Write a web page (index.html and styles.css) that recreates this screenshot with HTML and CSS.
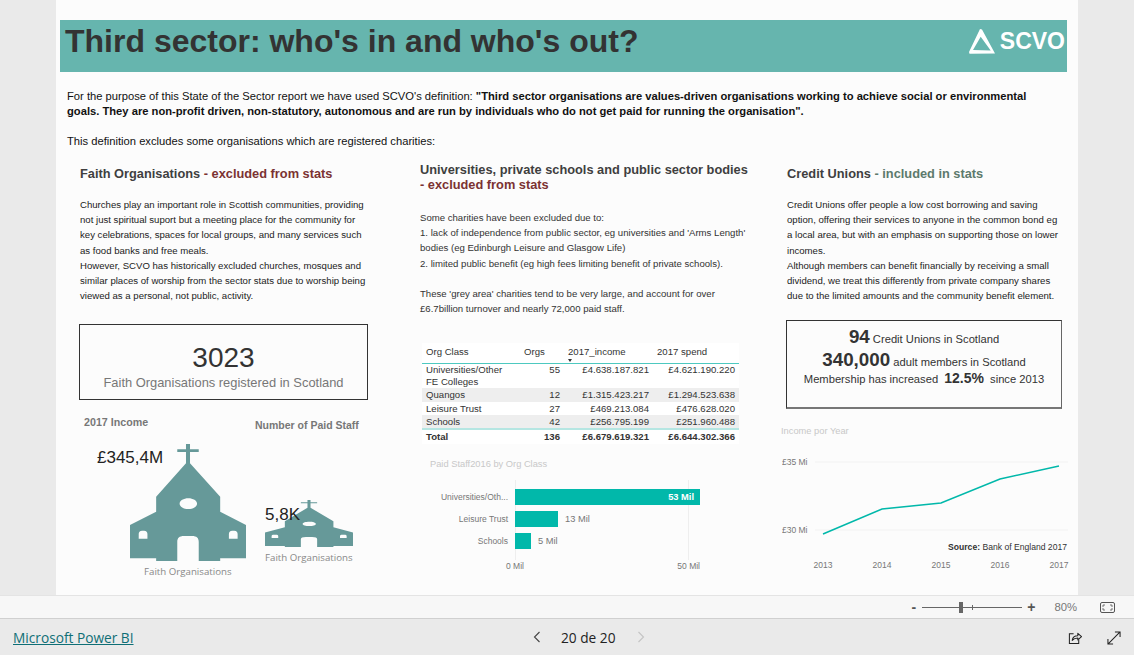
FILE: index.html
```html
<!DOCTYPE html>
<html lang="en">
  <head>
    <meta charset="UTF-8" />
    <meta name="viewport" content="width=device-width, initial-scale=1.0" />
    <title>Third sector: who's in and who's out?</title>
    <link rel="stylesheet" href="styles.css">
  </head>
  <body>
    <svg class="defs" width="0" height="0">
      <symbol id="church" viewBox="211 132 346 351" preserveAspectRatio="none">
        <path fill-rule="evenodd" d="M378 132h12v16h26v8h-26v34l90 100v45l77 40v100h-77v8H289v-8h-78V375l78-40v-45l89-100v-34h-26v-8h26zM385 295c-14 0-26 7-26 16s12 16 26 16 26-7 26-16-12-16-26-16zM372 408c-14 0-20 6-20 18v57h64v-57c0-12-6-18-20-18zM247 392c-7 0-10 4-10 10v14h26v-14c0-6-3-10-10-10zM516 392c-7 0-10 4-10 10v14h26v-14c0-6-3-10-10-10z" />
      </symbol>
    </svg>

    <main class="canvas">
      <header class="banner">
        <h1>Third sector: who's in and who's out?</h1>
        <div class="logo">
          <svg width="27" height="25" viewBox="0 0 27 25">
            <path fill="#fff" fill-rule="evenodd" d="M11 0 13 .5 26 24.500 .5 24.800 0 23zM11.700 7.700 4 21 21.700 21.500z" />
          </svg>
          <span>SCVO</span>
        </div>
      </header>

      <section class="intro">
        <p>For the purpose of this State of the Sector report we have used SCVO's definition: <b>"Third sector organisations are values-driven organisations working to achieve social or environmental<br>goals. They are non-profit driven, non-statutory, autonomous and are run by individuals who do not get paid for running the organisation".</b></p>
        <p class="intro-last">This definition excludes some organisations which are registered charities:</p>
      </section>

      <div class="columns">
        <section class="col col-faith">
          <h2>Faith Organisations <span class="out">- excluded from stats</span></h2>
          <p class="copy">Churches play an important role in Scottish communities, providing<br>not just spiritual suport but a meeting place for the community for<br>key celebrations, spaces for local groups, and many services such<br>as food banks and free meals.<br>However, SCVO has historically excluded churches, mosques and<br>similar places of worship from the sector stats due to worship being<br>viewed as a personal, not public, activity.</p>
          <div class="card-faith">
            <div class="card-num">3023</div>
            <div class="card-label">Faith Organisations registered in Scotland</div>
          </div>
          <div class="pictos">
            <div class="picto picto-income">
              <h3>2017 Income</h3>
              <div class="picto-value">£345,4M</div>
              <svg class="church-big"><use href="#church" /></svg>
              <div class="picto-label">Faith Organisations</div>
            </div>
            <div class="picto picto-staff">
              <h3>Number of Paid Staff</h3>
              <div class="picto-value">5,8K</div>
              <svg class="church-small"><use href="#church" /></svg>
              <div class="picto-label">Faith Organisations</div>
            </div>
          </div>
        </section>

        <section class="col col-uni">
          <h2>Universities, private schools and public sector bodies<br><span class="out">- excluded from stats</span></h2>
          <p class="copy">Some charities have been excluded due to:<br>1. lack of independence from public sector, eg universities and 'Arms Length'<br>bodies (eg Edinburgh Leisure and Glasgow Life)<br>2. limited public benefit (eg high fees limiting benefit of private schools).<br><br>These 'grey area' charities tend to be very large, and account for over<br>£6.7billion turnover and nearly 72,000 paid staff.</p>
          <table class="orgs">
            <thead>
              <tr><th class="c-name">Org Class</th><th class="c-orgs">Orgs</th><th class="c-inc">2017_income<i class="sort"></i></th><th class="c-spend">2017 spend</th></tr>
            </thead>
            <tbody>
              <tr><td>Universities/Other<br>FE Colleges</td><td class="num">55</td><td class="num">£4.638.187.821</td><td class="num">£4.621.190.220</td></tr>
              <tr class="alt"><td>Quangos</td><td class="num">12</td><td class="num">£1.315.423.217</td><td class="num">£1.294.523.638</td></tr>
              <tr><td>Leisure Trust</td><td class="num">27</td><td class="num">£469.213.084</td><td class="num">£476.628.020</td></tr>
              <tr class="alt"><td>Schools</td><td class="num">42</td><td class="num">£256.795.199</td><td class="num">£251.960.488</td></tr>
            </tbody>
            <tfoot>
              <tr><td>Total</td><td class="num">136</td><td class="num">£6.679.619.321</td><td class="num">£6.644.302.366</td></tr>
            </tfoot>
          </table>
          <div class="bars">
            <h4>Paid Staff2016 by Org Class</h4>
            <div class="bar-plot">
              <div class="bar-row"><span class="bar-name">Universities/Oth...</span><div class="bar" style="width: 185px"><em>53 Mil</em></div></div>
              <div class="bar-row"><span class="bar-name">Leisure Trust</span><div class="bar" style="width: 43px"></div><span class="bar-val">13 Mil</span></div>
              <div class="bar-row"><span class="bar-name">Schools</span><div class="bar" style="width: 16px"></div><span class="bar-val">5 Mil</span></div>
            </div>
            <div class="bar-axis"><span>0 Mil</span><span>50 Mil</span></div>
          </div>
        </section>

        <section class="col col-credit">
          <h2>Credit Unions <span class="in">- included in stats</span></h2>
          <p class="copy">Credit Unions offer people a low cost borrowing and saving<br>option, offering their services to anyone in the common bond eg<br>a local area, but with an emphasis on supporting those on lower<br>incomes.<br>Although members can benefit financially by receiving a small<br>dividend, we treat this differently from private company shares<br>due to the limited amounts and the community benefit element.</p>
          <div class="card-credit">
            <p class="first"><b class="big">94</b> Credit Unions in Scotland</p>
            <p class="second"><b class="big">340,000</b> adult members in Scotland</p>
            <p class="third">Membership has increased <b>12.5%</b> since 2013</p>
          </div>
          <div class="line-chart">
            <h4>Income por Year</h4>
            <svg class="line-svg" width="291" height="145" viewBox="0 0 291 145">
              <g class="grid">
                <line x1="33" y1="19" x2="286" y2="19" />
                <line x1="33" y1="87" x2="286" y2="87" />
              </g>
              <polyline class="trend" points="41,91 100,66 159,60 218,36 277,23" />
              <text class="tick" x="0" y="22">£35 Mi</text>
              <text class="tick" x="0" y="90">£30 Mi</text>
              <text class="src" x="285" y="107" text-anchor="end"><tspan font-weight="700">Source:</tspan> Bank of England 2017</text>
              <text class="tick" x="41" y="125" text-anchor="middle">2013</text>
              <text class="tick" x="100" y="125" text-anchor="middle">2014</text>
              <text class="tick" x="159" y="125" text-anchor="middle">2015</text>
              <text class="tick" x="218" y="125" text-anchor="middle">2016</text>
              <text class="tick" x="277" y="125" text-anchor="middle">2017</text>
            </svg>
          </div>
        </section>
      </div>
    </main>

    <div class="zoom-bar">
      <span class="zoom-btn">-</span>
      <div class="slider"><i class="thumb"></i><i class="mark"></i></div>
      <span class="zoom-btn">+</span>
      <span class="zoom-pct">80%</span>
      <svg class="fit" width="15" height="11" viewBox="0 0 15 11">
        <rect x="0.5" y="0.5" width="14" height="10" rx="1.5" fill="none" stroke="#555" />
        <path d="M3 5V3h2M10 3h2v2M12 6v2h-2M5 8H3V6" fill="none" stroke="#555" stroke-width="0.8" />
      </svg>
    </div>

    <footer class="footer">
      <a class="brand" href="#">Microsoft Power BI</a>
      <div class="pager">
        <svg width="8" height="12" viewBox="0 0 8 12"><path d="M6.5 1 1.5 6l5 5" fill="none" stroke="#444" stroke-width="1.1" /></svg>
        <span>20 de 20</span>
        <svg width="8" height="12" viewBox="0 0 8 12"><path d="M1.5 1l5 5-5 5" fill="none" stroke="#c4c4c4" stroke-width="1.1" /></svg>
      </div>
      <div class="actions">
        <svg width="14" height="14" viewBox="0 0 15 15">
          <path d="M6 3H1.500v10.500h10V9" fill="none" stroke="#222" stroke-width="1.100" />
          <path d="M4.500 10c.5-3.500 3-5 6-5V2.500L14.500 6l-4 3.500V7.500c-2.500 0-4.500 .8-6 2.500z" fill="none" stroke="#222" stroke-width="1.100" stroke-linejoin="round" />
        </svg>
        <svg width="14" height="14" viewBox="0 0 15 15">
          <path d="M1 14 14 1M8.500 1H14v5.500M1 8.500V14h5.500" fill="none" stroke="#222" stroke-width="1.100" />
        </svg>
      </div>
    </footer>
  </body>
</html>
```

FILE: styles.css
```css
* {
  box-sizing: border-box;
}

html,
body {
  height: 100%;
}

body {
  margin: 0;
  padding: 0;
  display: flex;
  flex-direction: column;
  overflow: hidden;
  font-family: "Liberation Sans", Arial, sans-serif;
  background-color: #eaeaea;
  color: #252423;
}

h1,
h2,
h3,
h4,
p {
  margin: 0;
  font-weight: normal;
}

.defs {
  position: absolute;
}

.canvas {
  width: 1022px;
  height: 595px;
  margin-left: 56px;
  padding: 20px 11px 0 4px;
  background-color: #fcfcfc;
  flex: none;
}

.banner {
  height: 52px;
  padding: 0 2px 10px 5px;
  display: flex;
  justify-content: space-between;
  align-items: center;
  background-color: #66b5ae;
}

.banner h1 {
  font-size: 32px;
  font-weight: 700;
  color: #333333;
}

.logo {
  display: flex;
  align-items: center;
  gap: 4px;
  color: #fff;
  font-size: 23px;
  font-weight: 700;
}

.intro {
  padding: 17px 0 0 7px;
  font-size: 11.2px;
  line-height: 15px;
  color: #111;
}

.intro-last {
  margin-top: 15px;
}

.columns {
  display: grid;
  grid-template-columns: 340px 367px 1fr;
  margin-left: 20px;
  margin-top: 13px;
}

.col h2 {
  font-size: 12.8px;
  font-weight: 700;
  line-height: 15px;
  color: #3f3f3f;
}

.out {
  color: #7b3232;
}

.in {
  color: #5d7a6c;
}

.copy {
  margin-top: 16px;
  font-size: 9.6px;
  line-height: 15.2px;
  color: #222;
}

.col-faith h2,
.col-credit h2 {
  padding-top: 4px;
}

.col-uni .copy {
  margin-top: 18px;
  color: #333;
}

.card-faith {
  width: 289px;
  height: 76px;
  margin-top: 21px;
  margin-left: -1px;
  padding-top: 17px;
  border: 1px solid #333;
  text-align: center;
}

.card-num {
  font-size: 28px;
  line-height: 32px;
  color: #333;
}

.card-label {
  margin-top: 1px;
  font-size: 12.9px;
  line-height: 16px;
  color: #777;
}

.pictos {
  position: relative;
  height: 170px;
  margin-top: 16px;
  margin-left: -1px;
}

.picto {
  position: absolute;
  top: 0;
}

.picto h3 {
  font-size: 10.7px;
  font-weight: 700;
  color: #777;
  white-space: nowrap;
}

.picto-value {
  position: absolute;
  font-size: 17px;
  color: #222;
}

.picto-label {
  position: absolute;
  font-family: "Open Sans", "Noto Sans", sans-serif;
  font-size: 9.7px;
  color: #888;
  white-space: nowrap;
}

.picto-income {
  left: 5px;
}

.picto-income .picto-value {
  left: 13px;
  top: 32px;
}

.church-big {
  position: absolute;
  left: 46px;
  top: 28px;
  width: 116px;
  height: 117px;
  fill: #669999;
}

.picto-income .picto-label {
  left: 60px;
  top: 149px;
}

.picto-staff {
  left: 176px;
  top: 3px;
}

.picto-staff h3 {
  font-size: 10.5px;
}

.picto-staff .picto-value {
  left: 10px;
  top: 86px;
  z-index: 1;
}

.church-small {
  position: absolute;
  left: 10px;
  top: 81px;
  width: 88px;
  height: 47px;
  fill: #669999;
}

.picto-staff .picto-label {
  left: 10px;
  top: 132px;
}

.orgs {
  width: 317px;
  margin-top: 27px;
  margin-left: 2px;
  table-layout: fixed;
  border-collapse: collapse;
  background-color: #fff;
  font-size: 9.6px;
  color: #333;
}

.orgs th {
  padding: 3px 4px 6px;
  height: 20px;
  font-weight: normal;
  text-align: left;
  vertical-align: top;
  position: relative;
  border-bottom: 1px solid #4dc9c0;
}

.c-name {
  width: 98px;
}

.c-orgs {
  width: 44px;
}

.c-inc {
  width: 89px;
}

.sort {
  position: absolute;
  left: 4px;
  bottom: 1px;
  border: 2px solid transparent;
  border-top: 3px solid #333;
  border-bottom: 0;
}

.orgs td {
  padding: 0 4px;
  line-height: 13.3px;
  vertical-align: top;
}

.orgs tbody tr:first-child td {
  line-height: 12px;
}

.orgs .num {
  text-align: right;
}

.orgs .alt td {
  background-color: #eeeeee;
}

.orgs tfoot td {
  font-weight: 700;
  border-top: 2px solid #b5e6e2;
}

.bars {
  margin-top: 15px;
  margin-left: 10px;
  position: relative;
}

.bars h4,
.line-chart h4 {
  font-size: 9.3px;
  color: #c8c8c8;
}

.bar-plot {
  margin-top: 11px;
  margin-left: 85px;
  height: 80px;
  padding-top: 9px;
  display: flex;
  flex-direction: column;
  gap: 6px;
  background:
    linear-gradient(#eee, #eee) 0 0 / 1px 100% no-repeat,
    linear-gradient(#eee, #eee) 173px 0 / 1px 100% no-repeat;
}

.bar-row {
  position: relative;
  height: 16px;
  display: flex;
  align-items: center;
  gap: 7px;
}

.bar-name {
  position: absolute;
  right: 100%;
  margin-right: 7px;
  font-size: 8.5px;
  color: #777;
  white-space: nowrap;
}

.bar {
  height: 16px;
  background-color: #01b8aa;
  display: flex;
  justify-content: flex-end;
  align-items: center;
  padding-right: 6px;
}

.bar em {
  font-style: normal;
  font-weight: 700;
  font-size: 9.3px;
  color: #fff;
}

.bar-val {
  font-size: 9.3px;
  color: #777;
}

.bar-axis {
  margin-left: 76px;
  width: 194px;
  display: flex;
  justify-content: space-between;
  font-size: 8.5px;
  line-height: 12px;
  color: #777;
}

.card-credit {
  width: 276px;
  height: 89px;
  margin-top: 17px;
  margin-left: -1px;
  padding-top: 4px;
  border: 1px solid #333;
  border-right-color: #666;
  border-bottom: 2px solid #777;
  text-align: center;
  font-size: 11.2px;
  color: #333;
}

.card-credit b {
  font-weight: 700;
}

.big {
  font-size: 18.8px;
}

.first {
  line-height: 24px;
}

.second {
  margin-top: -1px;
  line-height: 20px;
}

.third {
  margin-top: -1px;
  line-height: 14px;
}

.third b {
  margin: 0 3px;
  font-size: 14px;
}

.line-chart {
  margin-top: 17px;
  margin-left: -6px;
}

.line-svg {
  display: block;
  margin-top: 7px;
  margin-left: 1px;
}

.grid line {
  stroke: #f2f2f2;
  stroke-width: 1;
}

.trend {
  fill: none;
  stroke: #01b8aa;
  stroke-width: 1.5;
}

.tick {
  font-size: 8.5px;
  fill: #777;
}

.src {
  font-size: 8.6px;
  fill: #333;
}

.zoom-bar {
  flex: none;
  height: 24px;
  display: flex;
  justify-content: flex-end;
  align-items: center;
  padding-right: 19px;
  background-color: #f7f7f7;
  border-top: 1px solid #e4e4e4;
  border-bottom: 1px solid #d0d0d0;
}

.zoom-btn {
  font-size: 14px;
  font-weight: 700;
  color: #555;
}

.slider {
  position: relative;
  width: 100px;
  height: 1px;
  margin: 0 5px 0 6px;
  background-color: #666;
}

.thumb {
  position: absolute;
  left: 37px;
  top: -5px;
  width: 4px;
  height: 11px;
  background-color: #666;
}

.mark {
  position: absolute;
  left: 50px;
  top: -2px;
  width: 1px;
  height: 5px;
  background-color: #666;
}

.zoom-pct {
  margin-left: 19px;
  margin-right: 23px;
  font-size: 11.3px;
  color: #777;
}

.footer {
  flex: 1;
  position: relative;
  display: flex;
  align-items: center;
  padding: 0 13px 0 13px;
  background-color: #eaeaea;
}

.brand {
  font-family: "Open Sans", "Noto Sans", sans-serif;
  font-size: 13.7px;
  color: #0f6f76;
}

.pager {
  position: absolute;
  left: 533px;
  display: flex;
  align-items: center;
  gap: 20px;
  font-family: "Open Sans", "Noto Sans", sans-serif;
  font-size: 13.7px;
  color: #222;
}

.pager span {
  margin-right: 2px;
}

.actions {
  margin-left: auto;
  padding-top: 2px;
  display: flex;
  gap: 25px;
}
```
